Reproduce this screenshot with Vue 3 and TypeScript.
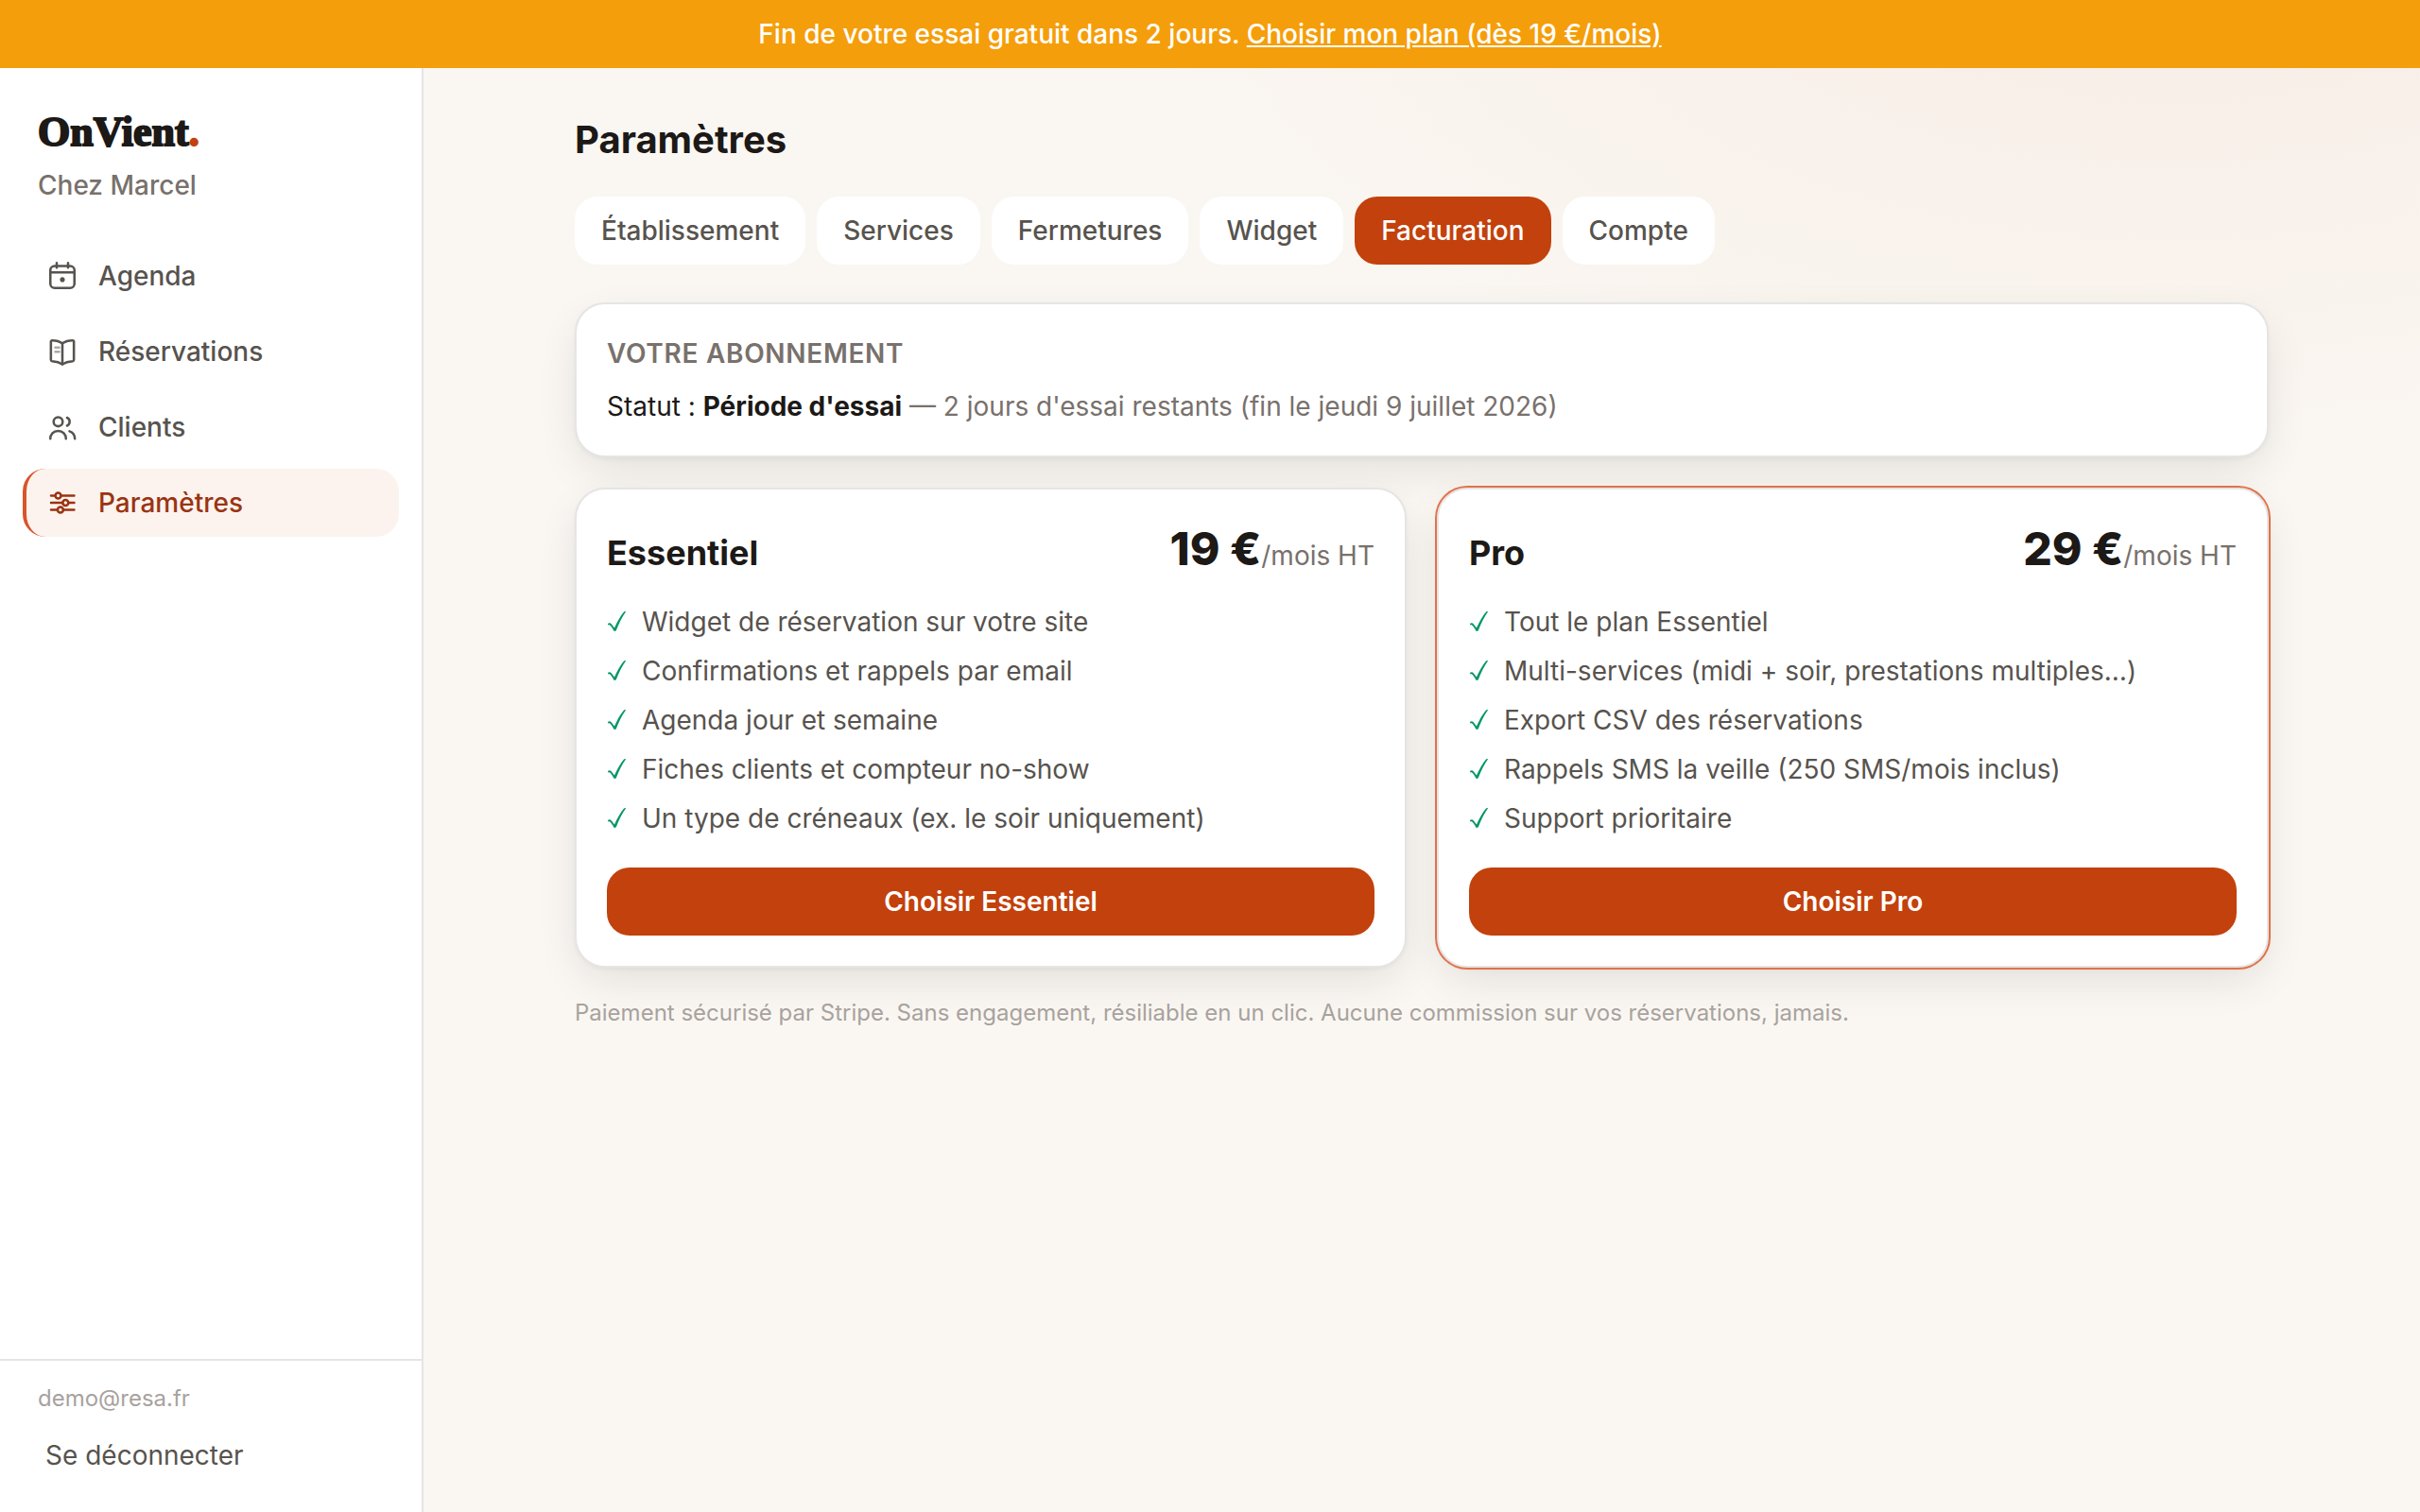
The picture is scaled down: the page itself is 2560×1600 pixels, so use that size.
<script setup lang="ts">
import { ref } from 'vue'

interface NavItem {
  id: string
  label: string
}

interface Plan {
  name: string
  price: string
  featured: boolean
  features: string[]
}

const navItems: NavItem[] = [
  { id: 'agenda', label: 'Agenda' },
  { id: 'reservations', label: 'Réservations' },
  { id: 'clients', label: 'Clients' },
  { id: 'parametres', label: 'Paramètres' },
]

const tabs: string[] = ['Établissement', 'Services', 'Fermetures', 'Widget', 'Facturation', 'Compte']

const currentPage = ref('parametres')
const currentTab = ref('Facturation')

const plans: Plan[] = [
  {
    name: 'Essentiel',
    price: '19 €',
    featured: false,
    features: [
      'Widget de réservation sur votre site',
      'Confirmations et rappels par email',
      'Agenda jour et semaine',
      'Fiches clients et compteur no-show',
      'Un type de créneaux (ex. le soir uniquement)',
    ],
  },
  {
    name: 'Pro',
    price: '29 €',
    featured: true,
    features: [
      'Tout le plan Essentiel',
      'Multi-services (midi + soir, prestations multiples…)',
      'Export CSV des réservations',
      'Rappels SMS la veille (250 SMS/mois inclus)',
      'Support prioritaire',
    ],
  },
]
</script>

<template>
  <div class="app">
    <div class="banner" role="status">
      Fin de votre essai gratuit dans 2 jours.
      <a href="#plans">Choisir mon plan (dès 19 €/mois)</a>
    </div>

    <div class="shell">
      <aside class="sidebar">
        <div class="brand">
          <div class="logo">OnVient<span class="dot">.</span></div>
          <p class="venue">Chez Marcel</p>
        </div>

        <nav class="nav" aria-label="Navigation principale">
          <a
            v-for="item in navItems"
            :key="item.id"
            :href="'#' + item.id"
            class="nav-link"
            :class="{ active: item.id === currentPage }"
            @click.prevent="currentPage = item.id"
          >
            <svg class="icon" viewBox="0 0 24 24" aria-hidden="true">
              <g v-if="item.id === 'agenda'">
                <rect x="3.5" y="5" width="17" height="15.5" rx="3" />
                <path d="M3.5 9.5h17M8 2.8v3.4M16 2.8v3.4" />
                <circle class="solid" cx="12" cy="14.6" r="1.7" />
              </g>
              <g v-else-if="item.id === 'reservations'">
                <path
                  d="M12 6.2C9.8 4.6 7.4 4.1 4.8 4.1a.9.9 0 0 0-.9.9v12.9c0 .6.4.9.9 1 2.7.2 5 .7 7.2 2.1 2.2-1.4 4.5-1.9 7.2-2.1.5-.1.9-.4.9-1V5a.9.9 0 0 0-.9-.9c-2.6 0-5 .5-7.2 2.1z"
                />
                <path d="M12 6.2V21" />
                <path class="faint" d="M7 9.2h2.7M7 12.2h2.7" />
              </g>
              <g v-else-if="item.id === 'clients'">
                <circle cx="9" cy="8.2" r="3.2" />
                <path d="M3.5 20.2c0-3.2 2.2-5.6 5.5-5.6s5.5 2.4 5.5 5.6" />
                <path d="M15.3 5.3c1.2.5 1.8 1.6 1.8 2.8s-.6 2.3-1.8 2.9M17 14.9c2.3.7 3.7 2.7 3.8 5.3" />
              </g>
              <g v-else>
                <path d="M4 7h2.9M11 7h9.3M4 12h8.1M16.2 12h4.1M4 17h4.6M12.7 17h7.6" />
                <circle cx="9" cy="7" r="2" />
                <circle cx="14.2" cy="12" r="2" />
                <circle cx="10.6" cy="17" r="2" />
              </g>
            </svg>
            {{ item.label }}
          </a>
        </nav>

        <div class="account">
          <p class="email">demo@resa.fr</p>
          <button type="button" class="logout">Se déconnecter</button>
        </div>
      </aside>

      <main class="main">
        <div class="content">
          <h1>Paramètres</h1>

          <div class="tabs">
            <button
              v-for="tab in tabs"
              :key="tab"
              type="button"
              class="tab"
              :class="{ active: tab === currentTab }"
              @click="currentTab = tab"
            >
              {{ tab }}
            </button>
          </div>

          <section class="card">
            <h2 class="card-title">Votre abonnement</h2>
            <p class="status">
              Statut : <strong>Période d'essai</strong>
              <span class="muted"> — 2 jours d'essai restants (fin le jeudi 9 juillet 2026)</span>
            </p>
          </section>

          <div id="plans" class="plans">
            <section v-for="plan in plans" :key="plan.name" class="card" :class="{ featured: plan.featured }">
              <header class="plan-head">
                <h3>{{ plan.name }}</h3>
                <p class="price">{{ plan.price }}<span class="per">/mois HT</span></p>
              </header>
              <ul class="features">
                <li v-for="feature in plan.features" :key="feature">
                  <svg class="check" viewBox="0 0 21 40" aria-hidden="true">
                    <path
                      d="M1 22C2.200 20.700 3.900 21 4.900 22.400L8 26.600C11 19.600 14.500 13.400 18.200 9.200L20.300 9C16.200 14.600 12.500 21.800 9.700 29.600L7.600 30C5.900 27 4.500 24.500 3.100 23.500C2.500 23 1.800 23.100 1.200 23.500Z"
                    />
                  </svg>
                  {{ feature }}
                </li>
              </ul>
              <button type="button" class="choose">Choisir {{ plan.name }}</button>
            </section>
          </div>

          <p class="note">
            Paiement sécurisé par Stripe. Sans engagement, résiliable en un clic. Aucune commission sur vos
            réservations, jamais.
          </p>
        </div>
      </main>
    </div>
  </div>
</template>

<style>
body {
  margin: 0;
  background: #faf7f2;
}
</style>

<style scoped>
.app {
  display: flex;
  flex-direction: column;
  min-height: 100vh;
  font-family: Inter, 'Liberation Sans', sans-serif;
  font-size: 28px;
  line-height: 40px;
  color: #1c1917;
  background:
    radial-gradient(2000px 1000px at 90% -5%, rgba(226, 90, 60, 0.07), transparent 60%),
    #faf7f2;
}

h1,
h2,
h3,
p,
ul {
  margin: 0;
  padding: 0;
}

button {
  font: inherit;
  border: 0;
  cursor: pointer;
}

.banner {
  padding: 16px 32px;
  background: #f59e0b;
  color: #fff;
  font-weight: 500;
  text-align: center;
}

.banner a {
  color: inherit;
  text-decoration: underline;
}

.shell {
  flex: 1;
  display: flex;
}

.sidebar {
  box-sizing: border-box;
  flex: none;
  width: 448px;
  display: flex;
  flex-direction: column;
  background: #fff;
  border-right: 2px solid #e5e5e5;
}

.brand {
  padding: 40px 40px 32px;
}

.logo {
  font-family: 'Liberation Serif', serif;
  font-size: 44px;
  line-height: 56px;
  font-weight: 700;
  -webkit-text-stroke: 2px currentColor;
}

.dot {
  color: #c2410c;
}

.venue {
  margin-top: 8px;
  font-weight: 500;
  color: #78716c;
}

.nav {
  flex: 1;
  display: flex;
  flex-direction: column;
  gap: 8px;
  padding: 8px 24px;
}

.nav-link {
  display: flex;
  align-items: center;
  gap: 20px;
  padding: 16px 20px;
  border-left: 4px solid transparent;
  border-radius: 24px;
  color: #57534e;
  font-weight: 500;
  text-decoration: none;
}

.nav-link.active {
  background: #fcf3ee;
  border-left-color: #d9532b;
  color: #9a3412;
}

.icon {
  width: 36px;
  height: 36px;
  fill: none;
  stroke: currentColor;
  stroke-width: 1.7;
  stroke-linecap: round;
  stroke-linejoin: round;
}

.solid {
  fill: currentColor;
  stroke: none;
}

.faint {
  opacity: 0.5;
}

.account {
  padding: 24px 40px;
  border-top: 2px solid #e5e5e5;
}

.email {
  font-size: 24px;
  line-height: 32px;
  color: #a8a29e;
}

.logout {
  margin-top: 8px;
  padding: 16px 8px;
  background: none;
  color: #57534e;
}

.main {
  flex: 1;
  min-width: 0;
  padding: 48px 64px;
}

.content {
  max-width: 1792px;
  margin: 0 auto;
}

h1 {
  font-size: 40px;
  line-height: 56px;
  font-weight: 700;
}

.tabs {
  display: flex;
  flex-wrap: wrap;
  gap: 12px;
  margin: 32px 0 40px;
}

.tab {
  padding: 16px 28px;
  border-radius: 24px;
  background: #fff;
  color: #57534e;
  font-weight: 500;
}

.tab.active {
  background: #c2410c;
  color: #fff;
}

.card {
  padding: 32px;
  border: 2px solid #e5e5e5;
  border-radius: 32px;
  background: #fff;
  box-shadow:
    0 2px 4px rgba(28, 25, 23, 0.04),
    0 16px 48px -8px rgba(28, 25, 23, 0.12);
}

.card.featured {
  box-shadow:
    0 0 0 2px #e2724a,
    0 2px 4px rgba(28, 25, 23, 0.04),
    0 16px 48px -8px rgba(28, 25, 23, 0.12);
}

.card-title {
  font-size: 28px;
  font-weight: 600;
  letter-spacing: 0.025em;
  text-transform: uppercase;
  color: #78716c;
}

.status {
  margin-top: 16px;
}

.status strong {
  font-weight: 700;
}

.muted {
  color: #78716c;
}

.plans {
  display: grid;
  grid-template-columns: 1fr 1fr;
  gap: 32px;
  margin-top: 32px;
}

.plan-head {
  display: flex;
  align-items: baseline;
  justify-content: space-between;
}

h3 {
  font-size: 36px;
  line-height: 48px;
  font-weight: 700;
}

.price {
  font-size: 48px;
  line-height: 62px;
  font-weight: 800;
}

.per {
  font-size: 28px;
  line-height: 40px;
  font-weight: 400;
  color: #78716c;
}

.features {
  display: flex;
  flex-direction: column;
  gap: 12px;
  margin: 26px 0 32px;
  list-style: none;
  color: #57534e;
}

.features li {
  display: flex;
  gap: 16px;
}

.check {
  flex: none;
  width: 21px;
  height: 40px;
  fill: #059669;
}

.choose {
  display: block;
  width: 100%;
  padding: 16px 32px;
  border-radius: 24px;
  background: #c2410c;
  color: #fff;
  font-weight: 600;
}

.note {
  margin-top: 32px;
  font-size: 24px;
  line-height: 32px;
  color: #a8a29e;
}
</style>
